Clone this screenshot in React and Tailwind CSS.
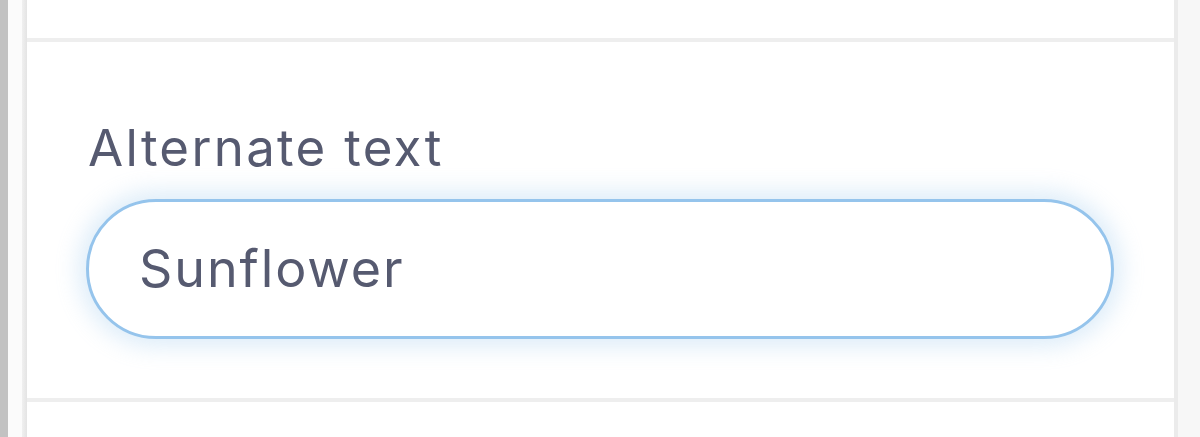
import React from 'react';

// Single form field: "Alternate text" input inside a bordered panel
const App = () => {
  return (
    <div className="flex h-[437px] w-[1200px] overflow-hidden bg-white font-['Inter',sans-serif]">
      {/* Left edge */}
      <div className="w-[8px] shrink-0 bg-[#c2c2c2]" />
      <div className="w-[14px] shrink-0 bg-[#fbfbfb]" />
      <div className="w-[5px] shrink-0 bg-gradient-to-r from-[#f0f0f0] to-[#e4e4e4]" />

      {/* Panel */}
      <div className="flex w-[1147px] shrink-0 flex-col bg-white">
        <div className="h-[38px] shrink-0 border-b-[4px] border-[#eeeeee] box-content" />
        <div className="flex h-[356px] shrink-0 flex-col pl-[61px] pr-[60px] pt-[76px]">
          <label className="text-[51px] leading-[60px] tracking-[2.3px] text-[#565a70]">
            Alternate text
          </label>
          <div className="mt-[21px] -ml-[2px] flex h-[140px] w-[1028px] items-center rounded-full border-[3px] border-[#95c4ec] bg-white pl-[50px] shadow-[0_0_22px_8px_rgba(147,195,236,0.3)]">
            <span className="text-[52px] tracking-[1.9px] text-[#565a70]">Sunflower</span>
          </div>
        </div>
        <div className="flex-1 border-t-[4px] border-[#eeeeee]" />
      </div>

      {/* Right edge */}
      <div className="w-[4px] shrink-0 bg-[#ebebeb]" />
      <div className="flex-1 bg-[#f7f7f7]" />
    </div>
  );
};

export default App;
